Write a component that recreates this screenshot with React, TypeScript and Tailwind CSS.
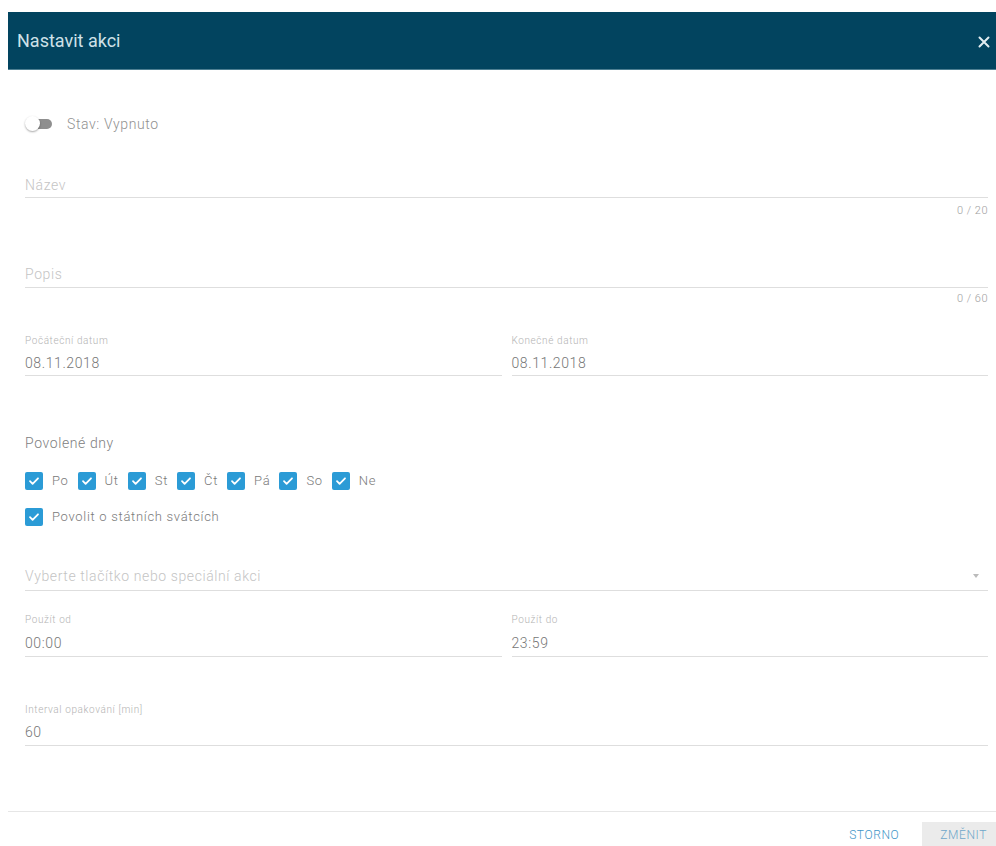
import { ReactNode } from 'react';

const font = { fontFamily: 'Roboto, "Liberation Sans", sans-serif' };

const days = ['Po', 'Út', 'St', 'Čt', 'Pá', 'So', 'Ne'];

function Check({ label }: { label: string }) {
    return (
        <div className="flex items-center">
            <span className="flex h-[18px] w-[18px] items-center justify-center rounded-[2px] bg-[#2b9bd6]">
                <svg width="12" height="12" viewBox="0 0 12 12" fill="none">
                    <path d="M2 6.2l2.6 2.6L10 3.3" stroke="#fff" strokeWidth="1.8" strokeLinecap="round" strokeLinejoin="round" />
                </svg>
            </span>
            <span className="ml-[9px] text-[13px] font-light tracking-[0.7px] text-[#7a7a7a]">{label}</span>
        </div>
    );
}

function Label({ children }: { children: ReactNode }) {
    return <div className="h-[12px] text-[10px] leading-[12px] font-light tracking-[0.6px] text-[#b3b3b3]">{children}</div>;
}

function Value({ children, mt, pb }: { children: ReactNode; mt: string; pb: string }) {
    return (
        <div className={`border-b border-[#dedede] text-[14px] leading-[20px] font-light tracking-[0.6px] text-[#767676] ${mt} ${pb}`}>
            {children}
        </div>
    );
}

function Placeholder({ children, pb }: { children: ReactNode; pb: string }) {
    return (
        <div className={`border-b border-[#dedede] text-[14px] leading-[20px] font-light tracking-[0.6px] text-[#c4c4c4] ${pb}`}>
            {children}
        </div>
    );
}

function Counter({ text, mt }: { text: string; mt: string }) {
    return <div className={`h-[14px] text-right text-[11px] leading-[14px] font-light tracking-[0.5px] text-[#9e9e9e] ${mt}`}>{text}</div>;
}

export default function App() {
    return (
        <div className="min-h-[846px] bg-white pt-[12px] pl-[8px]" style={font}>
            <header className="flex h-[57px] items-center justify-between bg-[#02445f] pl-[9px] pr-[5px] shadow-[0_1px_0_#4d7f92]">
                <h1 className="text-[18px] font-normal text-[#cfe1e8]">Nastavit akci</h1>
                <svg width="14" height="14" viewBox="0 0 14 14" className="mt-[2px]">
                    <path d="M2.5 2.5l9 9M11.5 2.5l-9 9" stroke="#e2edf1" strokeWidth="2" strokeLinecap="round" />
                </svg>
            </header>

            <div className="pl-[17px] pr-[8px]">
                <div className="mt-[45px] flex h-[20px] items-center">
                    <div className="relative h-[16px] w-[28px]">
                        <div className="absolute top-[3px] left-[6px] h-[10px] w-[21px] rounded-full bg-[#8f8f8f]" />
                        <div className="absolute top-0 left-0 h-[15px] w-[15px] rounded-full bg-white shadow-[0_1px_2px_rgba(0,0,0,0.35)]" />
                    </div>
                    <span className="ml-[14px] text-[14px] font-light tracking-[0.6px] text-[#909090]">Stav: Vypnuto</span>
                </div>

                <div className="mt-[41px]">
                    <Placeholder pb="pb-[2px]">Název</Placeholder>
                    <Counter text="0 / 20" mt="mt-[6px]" />
                </div>

                <div className="mt-[46px]">
                    <Placeholder pb="pb-[3px]">Popis</Placeholder>
                    <Counter text="0 / 60" mt="mt-[4px]" />
                </div>

                <div className="mt-[29px] grid grid-cols-2 gap-[10px]">
                    <div>
                        <Label>Počáteční datum</Label>
                        <Value mt="mt-[6px]" pb="pb-[2px]">08.11.2018</Value>
                    </div>
                    <div>
                        <Label>Konečné datum</Label>
                        <Value mt="mt-[6px]" pb="pb-[2px]">08.11.2018</Value>
                    </div>
                </div>

                <div className="mt-[58px] h-[18px] text-[14px] leading-[18px] font-light tracking-[0.6px] text-[#808080]">Povolené dny</div>
                <div className="mt-[20px] flex h-[18px] items-center gap-[9px]">
                    {days.map((d) => (
                        <Check key={d} label={d} />
                    ))}
                </div>
                <div className="mt-[18px] flex h-[18px] items-center">
                    <Check label="Povolit o státních svátcích" />
                </div>

                <div className="mt-[40px]">
                    <Placeholder pb="pb-[4px]">
                        <div className="flex items-center justify-between pr-[9px]">
                            <span>Vyberte tlačítko nebo speciální akci</span>
                            <span className="h-0 w-0 border-x-[3px] border-t-[4px] border-x-transparent border-t-[#bbb]" />
                        </div>
                    </Placeholder>
                </div>

                <div className="mt-[23px] grid grid-cols-2 gap-[10px]">
                    <div>
                        <Label>Použít od</Label>
                        <Value mt="mt-[7px]" pb="pb-[3px]">00:00</Value>
                    </div>
                    <div>
                        <Label>Použít do</Label>
                        <Value mt="mt-[7px]" pb="pb-[3px]">23:59</Value>
                    </div>
                </div>

                <div className="mt-[47px]">
                    <Label>Interval opakování [min]</Label>
                    <Value mt="mt-[6px]" pb="pb-[3px]">60</Value>
                </div>
            </div>

            <footer className="mt-[65px] flex items-start justify-end border-t border-[#e6e6e6] pt-[10px]">
                <button className="mr-[13px] h-[26px] px-[10px] text-[12px] font-light tracking-[0.6px] text-[#3f96c8]">STORNO</button>
                <button className="h-[36px] bg-[#ebebeb] pb-[10px] pl-[18px] pr-[9px] text-[12px] font-light tracking-[0.6px] text-[#6ea6c9]">
                    ZMĚNIT
                </button>
            </footer>
        </div>
    );
}
